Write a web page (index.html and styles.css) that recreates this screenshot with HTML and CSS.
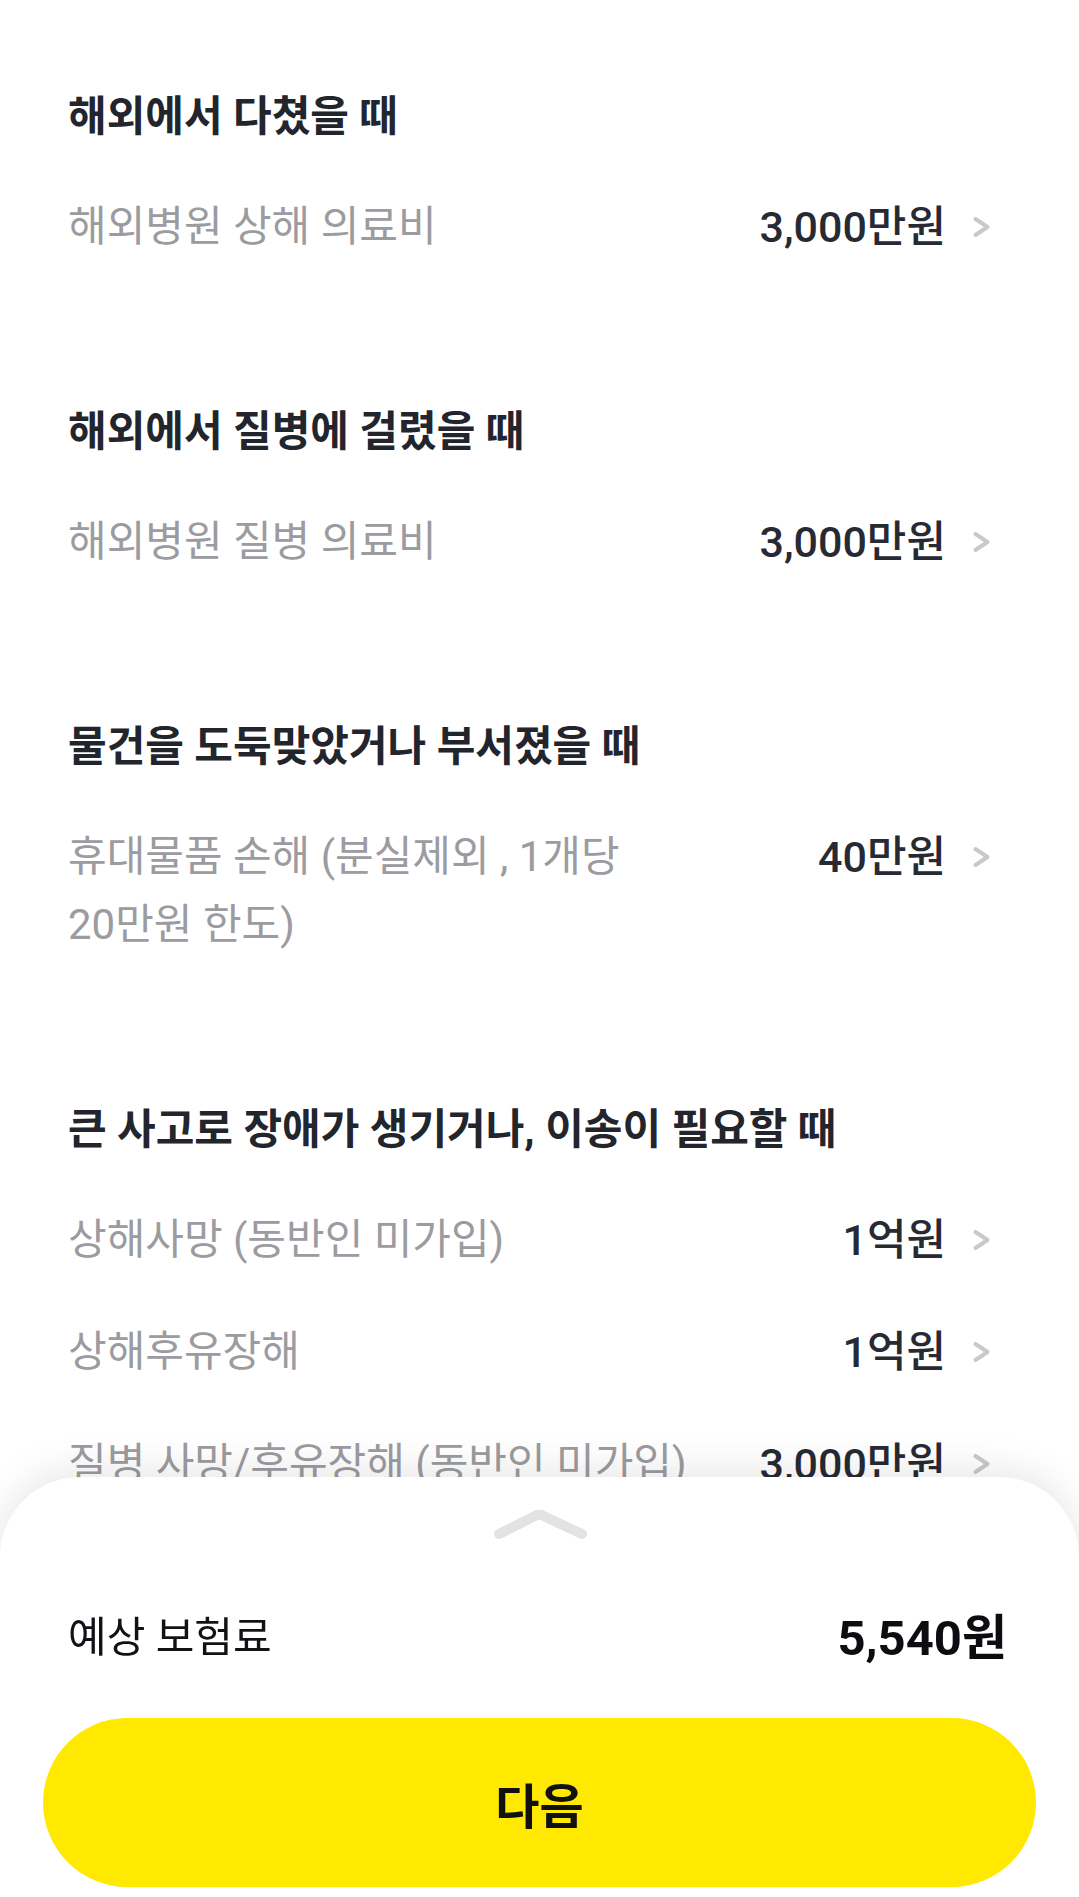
FILE: index.html
```html
<!doctype html>
<html lang="ko">
 <head>
  <meta charset="utf-8">
  <title>보장 내용</title>
  <meta name="viewport" content="width=device-width, initial-scale=1">
  <link rel="stylesheet" href="styles.css">
 </head>
 <body>
  <main class="coverage">
   <section class="group">
    <h2 class="group-title">해외에서 다쳤을 때</h2>
    <div class="row">
     <span class="row-label">해외병원 상해 의료비</span>
     <span class="row-value">3,000만원</span>
     <svg class="chev" viewBox="0 0 17 20"><polyline points="2.5,2 14.5,10 2.5,18"/></svg>
    </div>
   </section>
   <section class="group">
    <h2 class="group-title">해외에서 질병에 걸렸을 때</h2>
    <div class="row">
     <span class="row-label">해외병원 질병 의료비</span>
     <span class="row-value">3,000만원</span>
     <svg class="chev" viewBox="0 0 17 20"><polyline points="2.5,2 14.5,10 2.5,18"/></svg>
    </div>
   </section>
   <section class="group">
    <h2 class="group-title">물건을 도둑맞았거나 부서졌을 때</h2>
    <div class="row">
     <span class="row-label">휴대물품 손해 (분실제외 , 1개당 20만원 한도)</span>
     <span class="row-value">40만원</span>
     <svg class="chev" viewBox="0 0 17 20"><polyline points="2.5,2 14.5,10 2.5,18"/></svg>
    </div>
   </section>
   <section class="group">
    <h2 class="group-title">큰 사고로 장애가 생기거나, 이송이 필요할 때</h2>
    <div class="row">
     <span class="row-label">상해사망 (동반인 미가입)</span>
     <span class="row-value">1억원</span>
     <svg class="chev" viewBox="0 0 17 20"><polyline points="2.5,2 14.5,10 2.5,18"/></svg>
    </div>
    <div class="row">
     <span class="row-label">상해후유장해</span>
     <span class="row-value">1억원</span>
     <svg class="chev" viewBox="0 0 17 20"><polyline points="2.5,2 14.5,10 2.5,18"/></svg>
    </div>
    <div class="row">
     <span class="row-label">질병 사망/후유장해 (동반인 미가입)</span>
     <span class="row-value">3,000만원</span>
     <svg class="chev" viewBox="0 0 17 20"><polyline points="2.5,2 14.5,10 2.5,18"/></svg>
    </div>
   </section>
  </main>

  <div class="sheet">
   <svg class="handle" viewBox="0 0 100 34"><polyline points="9,24 49,4 92,24"/></svg>
   <div class="price">
    <span class="price-label">예상 보험료</span>
    <span class="price-value">5,540원</span>
   </div>
   <button class="next">다음</button>
  </div>
 </body>
</html>
```

FILE: styles.css
```css
body {
 margin: 0;
 background: #fff;
 font-family: Roboto, "Noto Sans CJK KR", sans-serif;
 color: #24262f;
}
.coverage {
 padding: 89px 89px 0 68px;
}
.group {
 margin-bottom: 121px;
}
.group-title {
 margin: 0 0 26px;
 font-size: 42px;
 line-height: 56px;
 font-weight: 700;
 color: #23252d;
}
.row {
 display: flex;
 align-items: flex-start;
 padding: 22px 0;
}
.row-label {
 flex: 1;
 max-width: 660px;
 font-size: 42px;
 line-height: 68px;
 color: #9b9ba0;
 word-break: keep-all;
}
.row-value {
 margin-left: auto;
 font-size: 43px;
 line-height: 68px;
 font-weight: 500;
 color: #272a33;
 white-space: nowrap;
}
.chev {
 width: 17px;
 height: 20px;
 margin: 24px 0 0 27px;
 flex: none;
}
.chev polyline {
 fill: none;
 stroke: #c9c9cc;
 stroke-width: 4;
 stroke-linecap: round;
 stroke-linejoin: round;
}
.sheet {
 position: fixed;
 left: 0;
 right: 0;
 bottom: 0;
 height: 420px;
 box-sizing: border-box;
 padding: 33px 0 10px;
 background: #fff;
 border-radius: 80px 80px 0 0;
 box-shadow: 0 -6px 40px rgba(0, 0, 0, 0.1);
 display: flex;
 flex-direction: column;
}
.handle {
 display: block;
 width: 100px;
 height: 34px;
 margin: 0 auto;
}
.handle polyline {
 fill: none;
 stroke: #e3e3e5;
 stroke-width: 10;
 stroke-linecap: round;
 stroke-linejoin: round;
}
.price {
 display: flex;
 justify-content: space-between;
 align-items: center;
 margin-top: 59px;
 padding: 0 72px 0 68px;
 height: 60px;
}
.price-label {
 font-size: 42px;
 color: #111216;
}
.price-value {
 font-size: 49px;
 font-weight: 700;
 color: #0c0d11;
}
.next {
 margin: auto 43px 0;
 height: 169px;
 border: none;
 border-radius: 85px;
 background: #ffe900;
 font-family: inherit;
 font-size: 48px;
 font-weight: 700;
 color: #111;
}
```
